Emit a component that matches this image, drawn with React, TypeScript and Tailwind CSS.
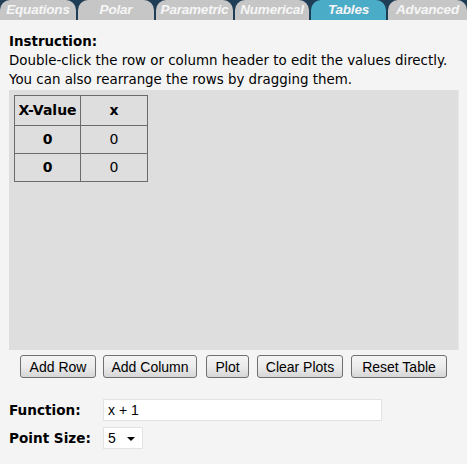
import React from "react";

const tabs = ["Equations", "Polar", "Parametric", "Numerical", "Tables", "Advanced"];
const tabW = ["w-[76px]", "w-[76px]", "w-[77px]", "w-[74px]", "w-[75px]", "w-[79px]"];

function Btn({ children, w, ml }: { children: React.ReactNode; w: string; ml: string }) {
  return (
    <button
      className={`${w} ${ml} h-[23px] rounded-[3px] border border-[#707070] bg-gradient-to-b from-[#f4f4f4] via-[#ececec] to-[#d6d6d6] text-[14px] text-black leading-none`}
      style={{ fontFamily: "'Liberation Sans', Arial, sans-serif" }}
    >
      {children}
    </button>
  );
}

export default function App() {
  return (
    <div
      className="w-[467px] h-[464px] bg-[#f4f4f4] overflow-hidden"
      style={{ fontFamily: "'DejaVu Sans', Verdana, sans-serif" }}
    >
      <div className="flex h-[20px] bg-[#1f3d55] gap-[2px] pl-0">
        {tabs.map((t, i) => (
          <div
            key={t}
            className={`${tabW[i]} h-[20px] pt-[1px] rounded-t-[10px] flex items-center justify-center italic font-bold text-[13.5px] tracking-[-0.2px] text-[#f6f6f6] whitespace-nowrap overflow-hidden ${
              t === "Tables" ? "bg-[#4bacc8]" : "bg-[#c6c6c6]"
            }`}
            style={{ fontFamily: "'Liberation Sans', Arial, sans-serif" }}
          >
            {t}
          </div>
        ))}
      </div>
      <div className="px-[9px] pt-[12px]">
        <div className="text-[13.4px] leading-[19px] text-black font-bold">Instruction:</div>
        <div className="text-[13.4px] leading-[19px] text-black whitespace-nowrap">
          Double-click the row or column header to edit the values directly.
        </div>
        <div className="text-[13.4px] leading-[19px] text-black">
          You can also rearrange the rows by dragging them.
        </div>
        <div className="mt-[1px] w-[450px] h-[260px] bg-[#dedede] border-r border-[#e8e8e8] p-[5px]">
          <table className="border-collapse border border-[#6b6b6b] text-[14px] text-black">
            <tbody>
              <tr className="h-[30px]">
                <td className="w-[66px] border border-[#6b6b6b] text-center font-bold">X-Value</td>
                <td className="w-[67px] border border-[#6b6b6b] text-center font-bold">x</td>
              </tr>
              <tr className="h-[28px]">
                <td className="border border-[#6b6b6b] text-center font-bold">0</td>
                <td className="border border-[#6b6b6b] text-center">0</td>
              </tr>
              <tr className="h-[28px]">
                <td className="border border-[#6b6b6b] text-center font-bold">0</td>
                <td className="border border-[#6b6b6b] text-center">0</td>
              </tr>
            </tbody>
          </table>
        </div>
        <div className="flex mt-[5px] pl-[11px]">
          <Btn w="w-[76px]" ml="ml-0">Add Row</Btn>
          <Btn w="w-[94px]" ml="ml-[7px]">Add Column</Btn>
          <Btn w="w-[43px]" ml="ml-[9px]">Plot</Btn>
          <Btn w="w-[86px]" ml="ml-[8px]">Clear Plots</Btn>
          <Btn w="w-[96px]" ml="ml-[8px]">Reset Table</Btn>
        </div>
        <div className="flex items-center mt-[21px]">
          <div className="w-[94px] text-[13.6px] font-bold text-black">Function:</div>
          <div
            className="w-[279px] h-[22px] bg-white border border-[#e3e3e3] flex items-center pl-[4px] text-[14px]"
            style={{ fontFamily: "'Liberation Sans', Arial, sans-serif" }}
          >
            x + 1
          </div>
        </div>
        <div className="flex items-center mt-[6px]">
          <div className="w-[94px] text-[13.6px] font-bold text-black">Point Size:</div>
          <div
            className="w-[40px] h-[22px] bg-white border border-[#e3e3e3] flex items-center pl-[4px] text-[14px] relative"
            style={{ fontFamily: "'Liberation Sans', Arial, sans-serif" }}
          >
            5
            <svg className="absolute right-[7px] top-[9px]" width="8" height="4" viewBox="0 0 8 4">
              <path d="M0 0 L8 0 L4 4 Z" fill="#000" />
            </svg>
          </div>
        </div>
      </div>
    </div>
  );
}
